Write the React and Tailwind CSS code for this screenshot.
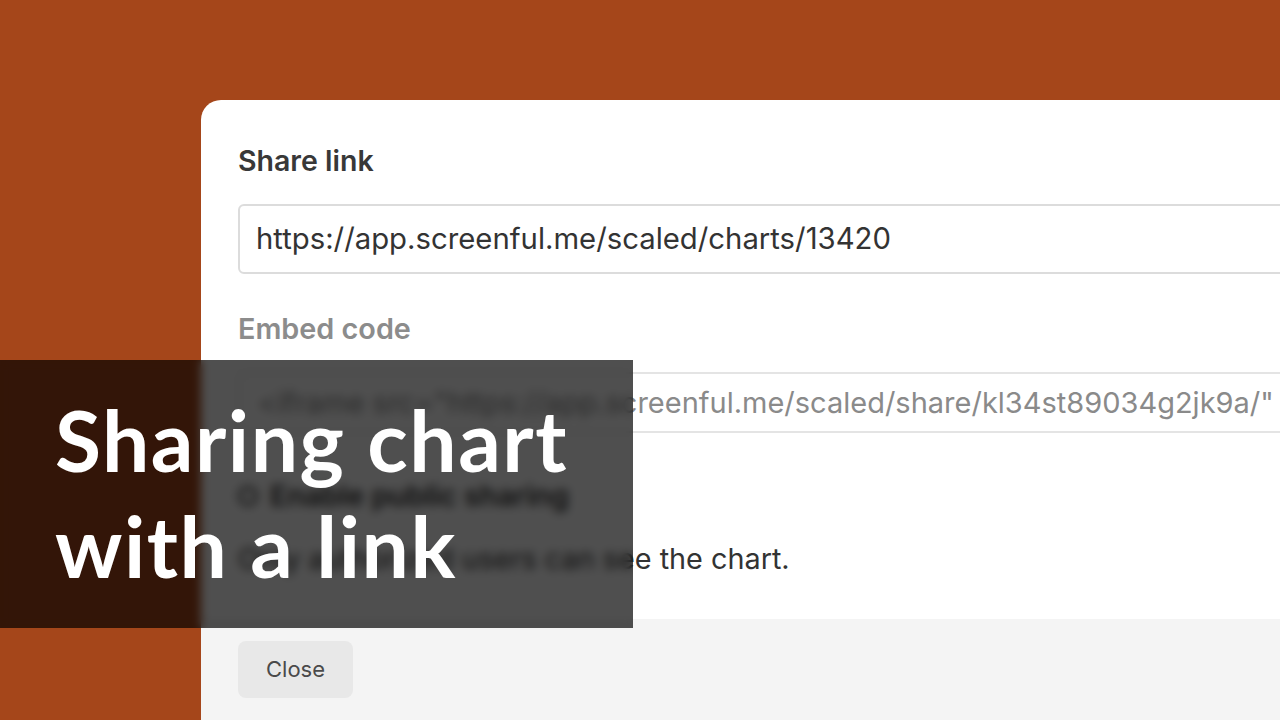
export default function App() {
  return (
    <div className="relative w-[1280px] h-[720px] overflow-hidden bg-[#a5461a]" style={{ fontFamily: 'Inter, "Noto Sans", sans-serif' }}>
      <div className="pt-[100px] pl-[201px]">
        <div className="w-[1200px] h-[700px] bg-white rounded-tl-[20px] flex flex-col overflow-hidden">
          <div className="px-[37px] pt-[44px] flex flex-col">
            <h2 className="text-[28.5px] leading-[34px] font-semibold text-[#383838]">Share link</h2>
            <div className="mt-[26px] h-[70px] border-2 border-[#dcdcdc] rounded-[6px] flex items-center pl-4 overflow-hidden">
              <span className="text-[29.3px] text-[#333] whitespace-nowrap">https://app.screenful.me/scaled/charts/13420</span>
            </div>
            <h3 className="mt-[38px] text-[28.8px] leading-[34px] font-semibold text-[#8c8c8c]">Embed code</h3>
            <div className="mt-[26px] h-[61px] border-2 border-[#e4e4e4] rounded-[6px] flex items-center pl-[18px] overflow-hidden">
              <span className="text-[29px] text-[#8a8a8a] whitespace-nowrap">{'<iframe src="https://app.screenful.me/scaled/share/kl34st89034g2jk9a/" width="800" height="600"></iframe>'}</span>
            </div>
            <label className="mt-[46px] h-[34px] flex items-center gap-3">
              <span className="w-[20px] h-[20px] rounded-full border-[3px] border-[#333]" />
              <span className="text-[28.8px] font-semibold text-[#333]">Enable public sharing</span>
            </label>
            <p className="mt-[29px] text-[28.8px] leading-[34px] text-[#333]">Only authorized users can see the chart.</p>
          </div>
          <div className="mt-[43px] flex-1 bg-[#f4f4f4] px-[37px] pt-[22px]">
            <button className="w-[115px] h-[57px] rounded-[8px] bg-[#e8e8e8] text-[22px] text-[#4a4a4a]">Close</button>
          </div>
        </div>
      </div>
      <div className="absolute left-0 top-[360px] w-[633px] h-[268px] bg-[rgba(0,0,0,0.69)] backdrop-blur-[5px] pl-[55px] pt-[27px]">
        <h1 className="text-[84px] leading-[106px] font-bold tracking-[1.5px] text-white" style={{ fontFamily: 'Lato, "Noto Sans", sans-serif' }}>
          Sharing chart<br />with a link
        </h1>
      </div>
    </div>
  )
}
